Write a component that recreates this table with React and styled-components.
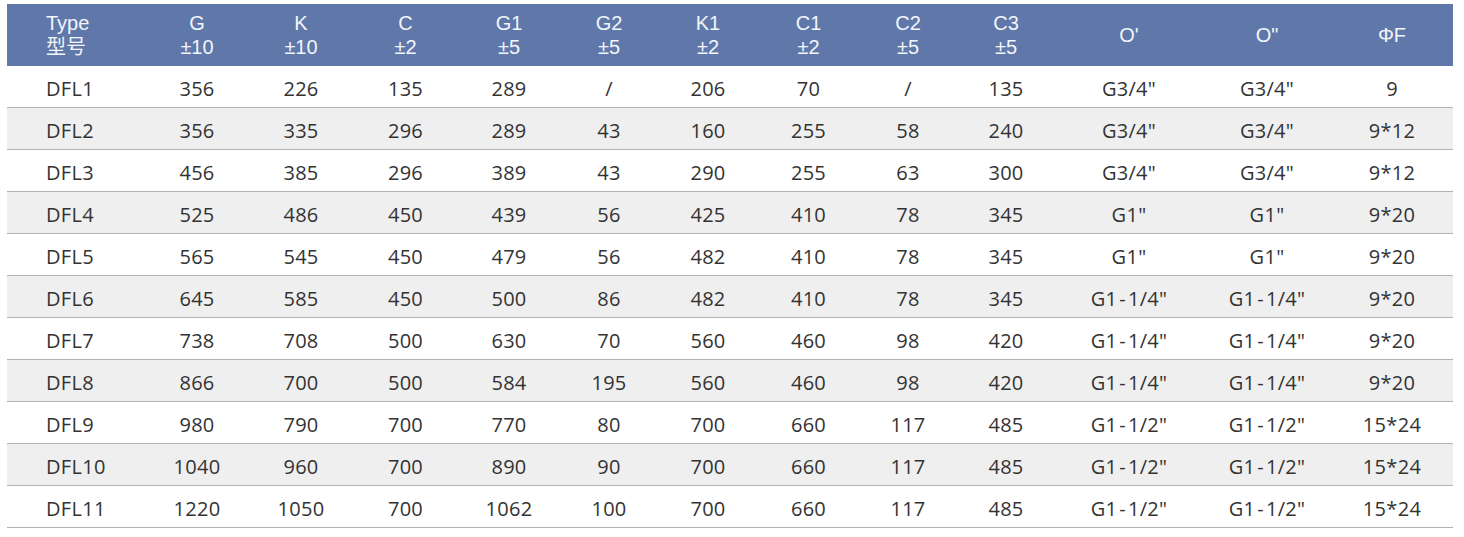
import React from 'react'
import styled, { createGlobalStyle } from 'styled-components'

const GlobalStyle = createGlobalStyle`
  html, body {
    margin: 0;
    padding: 0;
    background: #ffffff;
  }
`

const columns = '138px 104px 104px 105px 102px 98px 100px 101px 98px 98px 148px 128px 122px'

const Page = styled.div`
  padding: 4px 11px 0 7px;
`
const Table = styled.div`
  width: 1446px;
`
const HeaderRow = styled.div`
  display: grid;
  grid-template-columns: ${columns};
  height: 62px;
  background-color: #5f78a9;
  color: #f2f5fa;
  font-family: "Liberation Sans", Arial, "Noto Sans CJK SC", sans-serif;
  font-size: 20px;
  line-height: 24px;
`
const HeadCell = styled.div`
  display: flex;
  flex-direction: column;
  justify-content: center;
  align-items: ${p => (p.$left ? 'flex-start' : 'center')};
  padding-left: ${p => (p.$left ? '39px' : '0')};
`
const Row = styled.div`
  display: grid;
  grid-template-columns: ${columns};
  height: 41px;
  border-bottom: 1px solid #b3b3b3;
  background-color: ${p => (p.$alt ? '#efefef' : '#ffffff')};
  color: #333333;
  font-family: "Open Sans", "Noto Sans", sans-serif;
  font-size: 20px;
  letter-spacing: 0.3px;
`
const Cell = styled.div`
  display: flex;
  align-items: center;
  justify-content: ${p => (p.$left ? 'flex-start' : 'center')};
  padding-left: ${p => (p.$left ? '39px' : '0')};
  padding-top: 3px;
  white-space: nowrap;
`
const Dash = styled.span`
  margin: 0 2px;
`

const heads = [
  ['Type', '型号'],
  ['G', '±10'],
  ['K', '±10'],
  ['C', '±2'],
  ['G1', '±5'],
  ['G2', '±5'],
  ['K1', '±2'],
  ['C1', '±2'],
  ['C2', '±5'],
  ['C3', '±5'],
  ["O'"],
  ['O"'],
  ['ΦF']
]

const rows = [
  ['DFL1', '356', '226', '135', '289', '/', '206', '70', '/', '135', 'G3/4"', 'G3/4"', '9'],
  ['DFL2', '356', '335', '296', '289', '43', '160', '255', '58', '240', 'G3/4"', 'G3/4"', '9*12'],
  ['DFL3', '456', '385', '296', '389', '43', '290', '255', '63', '300', 'G3/4"', 'G3/4"', '9*12'],
  ['DFL4', '525', '486', '450', '439', '56', '425', '410', '78', '345', 'G1"', 'G1"', '9*20'],
  ['DFL5', '565', '545', '450', '479', '56', '482', '410', '78', '345', 'G1"', 'G1"', '9*20'],
  ['DFL6', '645', '585', '450', '500', '86', '482', '410', '78', '345', 'G1-1/4"', 'G1-1/4"', '9*20'],
  ['DFL7', '738', '708', '500', '630', '70', '560', '460', '98', '420', 'G1-1/4"', 'G1-1/4"', '9*20'],
  ['DFL8', '866', '700', '500', '584', '195', '560', '460', '98', '420', 'G1-1/4"', 'G1-1/4"', '9*20'],
  ['DFL9', '980', '790', '700', '770', '80', '700', '660', '117', '485', 'G1-1/2"', 'G1-1/2"', '15*24'],
  ['DFL10', '1040', '960', '700', '890', '90', '700', '660', '117', '485', 'G1-1/2"', 'G1-1/2"', '15*24'],
  ['DFL11', '1220', '1050', '700', '1062', '100', '700', '660', '117', '485', 'G1-1/2"', 'G1-1/2"', '15*24']
]

// thread sizes like G1-1/4" have a spaced hyphen in the source
const renderValue = v => {
  if (!v.includes('-')) return v
  const [a, b] = v.split('-')
  return (
    <>
      {a}
      <Dash>-</Dash>
      {b}
    </>
  )
}

const App = () => {
  return (
    <Page>
      <GlobalStyle />
      <Table>
        <HeaderRow>
          {heads.map((h, i) => (
            <HeadCell key={i} $left={i === 0}>
              {h.map(line => (
                <span key={line}>{line}</span>
              ))}
            </HeadCell>
          ))}
        </HeaderRow>
        {rows.map((r, ri) => (
          <Row key={r[0]} $alt={ri % 2 === 1}>
            {r.map((v, ci) => (
              <Cell key={ci} $left={ci === 0}>
                {renderValue(v)}
              </Cell>
            ))}
          </Row>
        ))}
      </Table>
    </Page>
  )
}

export default App
